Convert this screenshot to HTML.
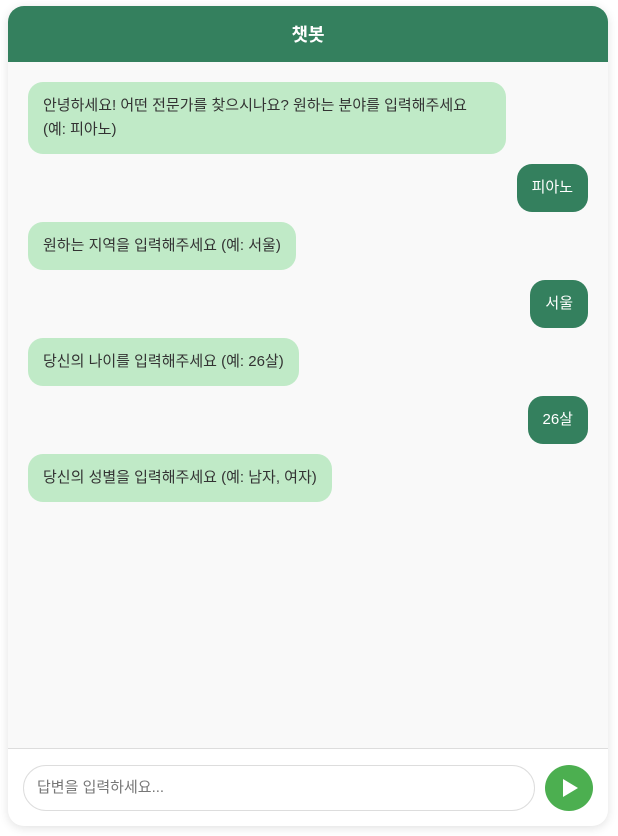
<!DOCTYPE html><html><head><meta charset="utf-8"><style>
body{margin:0;background:#fff;font-family:"Liberation Sans","Noto Sans CJK KR",sans-serif;}
.c{position:absolute;left:8px;top:6px;width:600px;height:820px;border-radius:16px;overflow:hidden;background:#fff;box-shadow:0 2px 10px rgba(0,0,0,.12);}
.h{height:56px;background:#34805e;color:#fff;font-weight:bold;font-size:18px;text-align:center;line-height:58px;}
.b{height:687px;background:#f9f9f9;border-bottom:1px solid #ddd;padding:20px 20px 0;box-sizing:border-box;}
.m{font-size:15px;line-height:24px;padding:12px 15px;border-radius:15px;margin-bottom:10px;clear:both;box-sizing:border-box;}
.bot{float:left;background:#c0eac7;color:#333;max-width:478px;}
.u{float:right;background:#34805e;color:#fff;}
.in{position:absolute;left:15px;top:759px;width:512px;height:46px;border:1px solid #ddd;border-radius:23px;box-sizing:border-box;font-size:15px;color:#777;padding-left:13px;line-height:44px;}
.btn{position:absolute;left:537px;top:759px;width:48px;height:46px;border-radius:50%;background:#4caf50;}
.btn:after{content:"";position:absolute;left:18px;top:14px;border-left:15px solid #fff;border-top:9px solid transparent;border-bottom:9px solid transparent;}
</style></head><body><div class="c">
<div class="h">챗봇</div>
<div class="b">
<div class="m bot">안녕하세요! 어떤 전문가를 찾으시나요? 원하는 분야를 입력해주세요 (예: 피아노)</div>
<div class="m u">피아노</div>
<div class="m bot">원하는 지역을 입력해주세요 (예: 서울)</div>
<div class="m u">서울</div>
<div class="m bot">당신의 나이를 입력해주세요 (예: 26살)</div>
<div class="m u">26살</div>
<div class="m bot">당신의 성별을 입력해주세요 (예: 남자, 여자)</div>
</div>
<div class="in">답변을 입력하세요...</div>
<div class="btn"></div>
</div></body></html>
